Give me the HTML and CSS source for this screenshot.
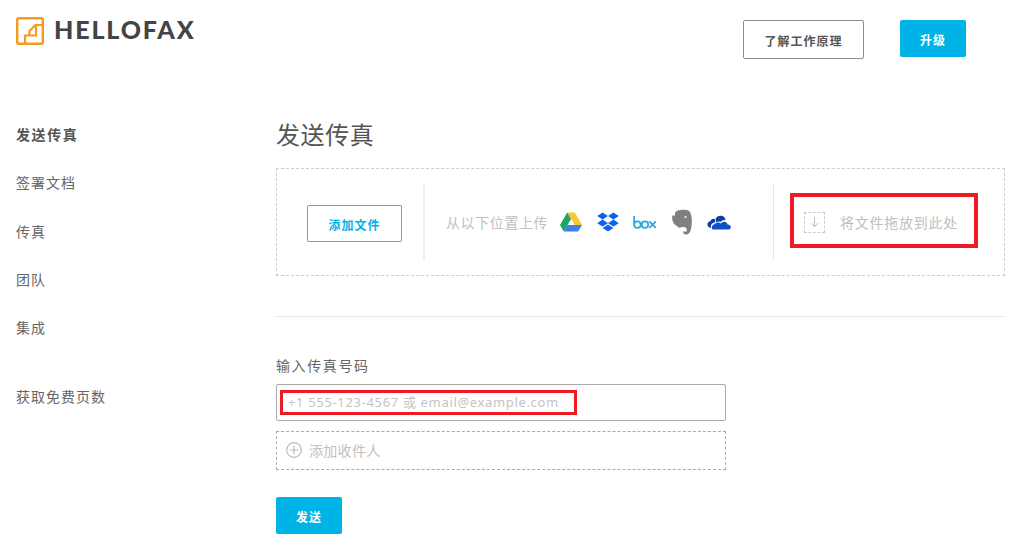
FILE: index.html
```html
<!DOCTYPE html>
<html lang="zh">
<head>
<meta charset="utf-8">
<title>HelloFax</title>
<link rel="stylesheet" href="styles.css">
</head>
<body>
<header class="header">
  <a class="logo">
    <svg class="logo-mark" width="28" height="28" viewBox="0 0 28 28"><rect x="1.2" y="1.2" width="25.6" height="25.6" rx="1.5" fill="none" stroke="#f59a23" stroke-width="2.4"/><path d="M9 26V18.5H13.5V14L19.5 8H26.5M13.5 18.5H20V8" fill="none" stroke="#f59a23" stroke-width="2.2"/></svg>
    <span class="logo-text">HELLOFAX</span>
  </a>
  <div class="header-actions">
    <button class="btn btn-outline">了解工作原理</button>
    <button class="btn btn-primary btn-upgrade">升级</button>
  </div>
</header>
<div class="layout">
  <nav class="sidenav">
    <a class="nav-item active">发送传真</a>
    <a class="nav-item">签署文档</a>
    <a class="nav-item">传真</a>
    <a class="nav-item">团队</a>
    <a class="nav-item">集成</a>
    <a class="nav-item nav-extra">获取免费页数</a>
  </nav>
  <main class="content">
    <h1 class="title">发送传真</h1>
    <section class="upload">
      <div class="upload-add"><span class="btn btn-file">添加文件</span></div>
      <div class="upload-sources">
        <span class="upload-label">从以下位置上传</span>
        <div class="source-icons">
          <svg width="24" height="20" viewBox="0 0 24 20"><path d="M8.2 0.5H15.8L23 13H15.6Z" fill="#f7c92e"/><path d="M8.2 0.5L12 7L4.8 19.5L1 13Z" fill="#1fa463"/><path d="M8.4 13H23L19.2 19.5H4.8Z" fill="#3f7fe8"/></svg>
          <svg width="22" height="20" viewBox="1 0 20 18.5"><path d="M6 0.5L11 3.8L6 7L1 3.8ZM16 0.5L21 3.8L16 7L11 3.8ZM6 7L11 10.3L6 13.5L1 10.3ZM16 7L21 10.3L16 13.5L11 10.3ZM6 14.7L11 11.5L16 14.7L11 18Z" fill="#0d61f2"/></svg>
          <svg width="24" height="13" viewBox="0 0 22 12"><g fill="none" stroke="#29a8e0" stroke-width="1.6"><path d="M1 0V8"/><circle cx="4" cy="8" r="3"/><circle cx="11" cy="8" r="3"/><path d="M15 5L21 11M21 5L15 11"/></g></svg>
          <svg width="22" height="26" viewBox="0 0 22 26"><path d="M4 3.5C6 1 10 0.5 14 0.8C18 1 20 3 20.5 8C21 12 21 16 20 20C19.5 23 18 25.5 15 25.5C12.5 25.5 12 23.5 12.5 22.5C13.5 22 14.5 23 15.5 22.5C16.5 21.5 15.5 18 13 18C10 18 8 19.5 7 18C5 16 2 15.5 1.2 10V6.5H4Z" fill="#808080"/><circle cx="14.5" cy="8" r="1" fill="#fff"/></svg>
          <svg width="24" height="15" viewBox="0 0 24 15"><path d="M8.5 4C9.5 1 13 0 15.5 1C17 1.6 18 2.6 18.5 5C16 4.8 14.5 5.5 13.5 7C12 6.2 10 6.5 9 7.5C9.3 6 9 5 8.5 4Z" fill="#0a3fa8"/><path d="M7.5 4C8.5 4.6 8.4 6 8 7.6C6 7.8 3.8 9 3.8 11.5C3.8 12 3.9 12.5 4.2 13C1.5 12.8 0 11 0.5 8.8C1 7.3 2 6.6 3.3 6.3C4 4.2 5.8 3.3 7.5 4Z" fill="#0a3fa8"/><path d="M5.5 14.5C4.2 13 4.8 9.8 7.5 9.3C9 7.4 12 7 13.8 8.4C16 5.8 20 6 20.5 9.4C22.5 9.4 24 10.6 23.8 12.6C23.6 14 22.5 14.5 21.5 14.5Z" fill="#0f50c8"/></svg>
        </div>
      </div>
      <div class="upload-drop">
        <span class="drop-icon"><svg width="11" height="12" viewBox="0 0 11 12"><path d="M5.5 1V10.5M2 7.2L5.5 10.7L9 7.2" fill="none" stroke="#bbb" stroke-width="1"/></svg></span>
        <span class="drop-text">将文件拖放到此处</span>
      </div>
      <span class="mark mark-drop"></span>
    </section>
    <hr class="rule">
    <label class="field-label">输入传真号码</label>
    <div class="recipient">
      <div class="input-box">+1 555-123-4567 或 email@example.com</div>
      <span class="mark mark-input"></span>
    </div>
    <div class="add-recipient">
      <svg width="16" height="16" viewBox="0 0 16 16"><circle cx="8" cy="8" r="7.3" fill="none" stroke="#bbb" stroke-width="1.2"/><path d="M8 3.8V12.2M3.8 8H12.2" stroke="#bbb" stroke-width="1.2"/></svg>
      <span>添加收件人</span>
    </div>
    <button class="btn btn-primary btn-send">发送</button>
  </main>
</div>
</body>
</html>
```
FILE: styles.css
```css
* { box-sizing: border-box; }
html, body { margin: 0; padding: 0; }
body {
  width: 1024px;
  height: 544px;
  overflow: hidden;
  background: #fff;
  color: #666;
  font-family: "Noto Sans CJK SC", "Noto Sans", sans-serif;
  font-size: 14px;
}
.header {
  display: flex;
  justify-content: space-between;
  align-items: flex-start;
  height: 117px;
  padding: 17px 58px 0 16px;
}
.logo { display: flex; align-items: center; gap: 10px; height: 28px; }
.logo-text {
  font-family: Lato, sans-serif;
  font-weight: 900;
  font-size: 25px;
  line-height: 26px;
  letter-spacing: 1.85px;
  color: #444;
  padding-bottom: 4px;
}
.header-actions { display: flex; align-items: flex-start; gap: 36px; padding-top: 3px; }
.btn {
  font-family: inherit;
  font-weight: 700;
  font-size: 12px;
  letter-spacing: 1px;
  border-radius: 2px;
  padding: 2px 0 0;
}
.btn-outline { width: 121px; height: 39px; background: #fff; border: 1px solid #8c8c8c; color: #555; }
.btn-primary { width: 66px; height: 37px; background: #00b3e6; border: 0; color: #fff; }
.layout { display: flex; }
.sidenav { width: 276px; padding: 8px 0 0 16px; display: flex; flex-direction: column; }
.nav-item { height: 48.3px; line-height: 18px; letter-spacing: 1px; color: #666; }
.nav-item.active { font-weight: 700; letter-spacing: 1.6px; color: #555; }
.nav-extra { margin-top: 20.5px; }
.content { width: 729px; display: flex; flex-direction: column; align-items: flex-start; }
.title {
  margin: 0 0 18px;
  height: 33px;
  line-height: 33px;
  font-size: 24px;
  font-weight: 400;
  letter-spacing: 0.6px;
  color: #555;
}
.upload {
  position: relative;
  width: 729px;
  height: 108px;
  border: 1px dashed #ccc;
  display: flex;
  align-items: center;
}
.upload-add { width: 148px; height: 76px; border-right: 2px solid #f0f0f0; padding: 2px 0 0 30px; display: flex; align-items: center; }
.btn-file { display: flex; align-items: center; justify-content: center; width: 95px; height: 37px; background: #fff; box-shadow: inset 0 0 0 1px #2fbce8; color: #00b3e6; }
.upload-sources { width: 349px; height: 76px; border-right: 1px solid #e8e8e8; padding-left: 21px; display: flex; align-items: center; }
.upload-label { width: 113px; letter-spacing: 0.6px; color: #c0c0c0; }
.source-icons { display: flex; align-items: center; gap: 14px; }
.upload-drop { display: flex; align-items: center; padding-left: 30px; }
.drop-icon { width: 21px; height: 21px; border: 1px dashed #ccc; display: flex; align-items: center; justify-content: center; margin-right: 15px; }
.drop-text { letter-spacing: 0.75px; color: #c0c0c0; }
.mark { position: absolute; border: 4px solid #ed1c24; pointer-events: none; }
.mark-drop { left: 513px; top: 24px; width: 188px; height: 55px; }
.rule { width: 729px; height: 1px; margin: 40px 0 39px; border: 0; background: #e6e6e6; }
.field-label { height: 18px; line-height: 18px; letter-spacing: 1.6px; color: #666; }
.recipient { position: relative; width: 450px; margin-top: 10px; }
.input-box {
  height: 37px;
  line-height: 35px;
  border: 1px solid #aaa;
  border-radius: 2px;
  padding-left: 11px;
  font-family: "Noto Sans", "Noto Sans CJK SC", sans-serif;
  font-size: 13px;
  letter-spacing: 0.66px;
  color: #c4c4c4;
}
.mark-input { left: 4px; top: 6px; width: 297px; height: 25px; border-width: 3px; }
.add-recipient {
  width: 450px;
  height: 39px;
  margin-top: 10px;
  border: 1px dashed #aaa;
  display: flex;
  align-items: center;
  gap: 7px;
  padding: 0 0 2px 9px;
  letter-spacing: 0.3px;
  color: #c0c0c0;
}
.btn-send { margin-top: 27px; }
```
